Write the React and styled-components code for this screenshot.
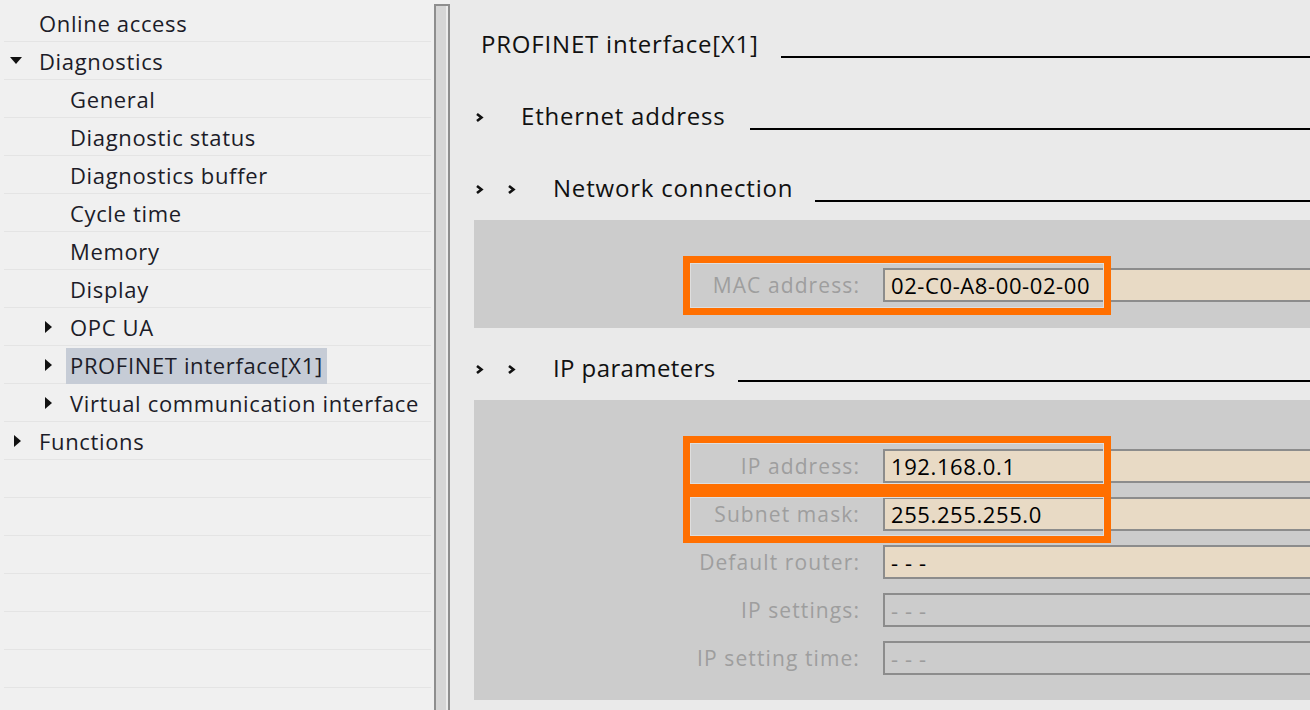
import React from "react";
import styled, { createGlobalStyle } from "styled-components";

const Global = createGlobalStyle`
  html, body { margin: 0; padding: 0; }
  body {
    font-family: "Open Sans", "Noto Sans", sans-serif;
    width: 1310px;
    height: 710px;
    overflow: hidden;
    background: #eaeaea;
  }
`;

const Screen = styled.div`
  display: flex;
  width: 1310px;
  height: 710px;
  overflow: hidden;
`;

/* ---------- left tree ---------- */
const TreePane = styled.div`
  width: 434px;
  flex: none;
  background: #f0f0f0;
  padding-top: 4px;
  box-sizing: border-box;
`;

const TreeRow = styled.div`
  display: flex;
  align-items: center;
  height: 38px;
  box-sizing: border-box;
  margin: 0 3px 0 4px;
  border-bottom: 1.5px solid #e4e4e4;
  padding-left: ${(p) => p.$level * 31}px;
`;

const ArrowBox = styled.span`
  width: 35px;
  flex: none;
  display: flex;
  align-items: center;
  height: 100%;
`;

const TriDown = styled.span`
  margin-left: 6px;
  width: 0;
  height: 0;
  border-left: 6px solid transparent;
  border-right: 6px solid transparent;
  border-top: 7px solid #111;
`;

const TriRight = styled.span`
  margin-left: 10px;
  width: 0;
  height: 0;
  border-top: 6px solid transparent;
  border-bottom: 6px solid transparent;
  border-left: 7px solid #111;
`;

const TreeLabel = styled.span`
  font-size: 22px;
  letter-spacing: 0.65px;
  color: #1c1c28;
  white-space: nowrap;
  padding: 0 4px;
  margin-left: -4px;
  height: 36px;
  line-height: 34px;
  margin-top: 2px;
  background: ${(p) => (p.$selected ? "#c6ccd6" : "transparent")};
`;

const Splitter = styled.div`
  width: 16px;
  flex: none;
  background: #f0f0f0;
  display: flex;
  flex-direction: column;
  padding-top: 4px;
  box-sizing: border-box;
`;

const SplitterTrack = styled.div`
  flex: 1;
  border: 2px solid #8e8e8e;
  border-bottom: none;
  background: linear-gradient(to right, #d6d6d6 0 10px, #ececec 10px);
`;

/* ---------- right properties ---------- */
const PropPane = styled.div`
  flex: 1;
  min-width: 0;
  background: #eaeaea;
  padding: 27px 0 0 24px;
  box-sizing: border-box;
`;

const Heading = styled.div`
  display: flex;
  align-items: center;
  height: 36px;
  margin-top: ${(p) => p.$gap}px;
  padding-left: ${(p) => p.$indent}px;
`;

const HeadText = styled.span`
  font-size: 24px;
  line-height: 34px;
  padding-bottom: 2px;
  letter-spacing: ${(p) => p.$ls}px;
  color: #111;
  white-space: nowrap;
  margin-left: ${(p) => p.$textLeft}px;
`;

const HeadLine = styled.div`
  flex: 1;
  height: 0;
  border-bottom: 2px solid #000;
  margin-top: 24px;
  margin-left: ${(p) => p.$gap}px;
`;

const Chevrons = styled.span`
  display: flex;
  gap: 23px;
  align-items: center;
`;

const Panel = styled.div`
  background: #cccccc;
  margin-top: 13px;
  height: ${(p) => p.$h}px;
  padding-top: ${(p) => p.$pt}px;
  box-sizing: border-box;
  display: flex;
  flex-direction: column;
  gap: 14px;
`;

const FieldRow = styled.div`
  position: relative;
  display: grid;
  grid-template-columns: 386px 1fr;
  column-gap: 23px;
  align-items: center;
  height: 34px;
`;

const Label = styled.span`
  text-align: right;
  font-size: 21px;
  letter-spacing: 1.1px;
  color: #9e9e9e;
  white-space: nowrap;
`;

const Field = styled.div`
  height: 34px;
  box-sizing: border-box;
  border: 2px solid #8c8c8c;
  border-right: none;
  background: ${(p) => (p.$editable ? "#e8dac5" : "#cccccc")};
  color: ${(p) => (p.$editable ? "#000" : "#9c9c9c")};
  font-size: 22px;
  letter-spacing: 0.6px;
  line-height: 30px;
  padding-left: 6px;
  white-space: nowrap;
`;

const Highlight = styled.div`
  position: absolute;
  left: 209px;
  width: 428px;
  top: ${(p) => -p.$up}px;
  bottom: ${(p) => -p.$down}px;
  border: 7px solid #ff6f00;
  box-sizing: border-box;
  box-shadow: inset 0 0 0 1px #dedede;
  pointer-events: none;
`;

const Chevron = () => (
  <svg width="9" height="11" viewBox="0 0 9 11">
    <polyline points="2,2 6.5,5.5 2,9" fill="none" stroke="#111" strokeWidth="2.6" />
  </svg>
);

const tree = [
  { level: 0, label: "Online access" },
  { level: 0, label: "Diagnostics", arrow: "down" },
  { level: 1, label: "General" },
  { level: 1, label: "Diagnostic status" },
  { level: 1, label: "Diagnostics buffer" },
  { level: 1, label: "Cycle time" },
  { level: 1, label: "Memory" },
  { level: 1, label: "Display" },
  { level: 1, label: "OPC UA", arrow: "right" },
  { level: 1, label: "PROFINET interface[X1]", arrow: "right", selected: true },
  { level: 1, label: "Virtual communication interface", arrow: "right" },
  { level: 0, label: "Functions", arrow: "right" },
  {}, {}, {}, {}, {}, {},
];

const ipRows = [
  { label: "IP address:", value: "192.168.0.1", editable: true, hl: [13, 8] },
  { label: "Subnet mask:", value: "255.255.255.0", editable: true, hl: [7, 12] },
  { label: "Default router:", value: "- - -", editable: true },
  { label: "IP settings:", value: "- - -" },
  { label: "IP setting time:", value: "- - -" },
];

export default function App() {
  return (
    <>
      <Global />
      <Screen>
        <TreePane>
          {tree.map((n, i) => (
            <TreeRow key={i} $level={n.level || 0}>
              {n.label && (
                <>
                  <ArrowBox>
                    {n.arrow === "down" && <TriDown />}
                    {n.arrow === "right" && <TriRight />}
                  </ArrowBox>
                  <TreeLabel $selected={n.selected}>{n.label}</TreeLabel>
                </>
              )}
            </TreeRow>
          ))}
        </TreePane>
        <Splitter>
          <SplitterTrack />
        </Splitter>
        <PropPane>
          <Heading $gap={0} $indent={7}>
            <HeadText $ls={0.8} $textLeft={0}>PROFINET interface[X1]</HeadText>
            <HeadLine $gap={22} />
          </Heading>
          <Heading $gap={36} $indent={1}>
            <Chevrons><Chevron /></Chevrons>
            <HeadText $ls={0.8} $textLeft={37}>Ethernet address</HeadText>
            <HeadLine $gap={24} />
          </Heading>
          <Heading $gap={36} $indent={1}>
            <Chevrons><Chevron /><Chevron /></Chevrons>
            <HeadText $ls={0.8} $textLeft={37}>Network connection</HeadText>
            <HeadLine $gap={22} />
          </Heading>
          <Panel $h={108} $pt={48}>
            <FieldRow>
              <Label>MAC address:</Label>
              <Field $editable>02-C0-A8-00-02-00</Field>
              <Highlight $up={12} $down={13} />
            </FieldRow>
          </Panel>
          <Heading $gap={23} $indent={1}>
            <Chevrons><Chevron /><Chevron /></Chevrons>
            <HeadText $ls={0.4} $textLeft={37}>IP parameters</HeadText>
            <HeadLine $gap={22} />
          </Heading>
          <Panel $h={300} $pt={49}>
            {ipRows.map((r) => (
              <FieldRow key={r.label}>
                <Label>{r.label}</Label>
                <Field $editable={r.editable}>{r.value}</Field>
                {r.hl && <Highlight $up={r.hl[0]} $down={r.hl[1]} />}
              </FieldRow>
            ))}
          </Panel>
        </PropPane>
      </Screen>
    </>
  );
}
